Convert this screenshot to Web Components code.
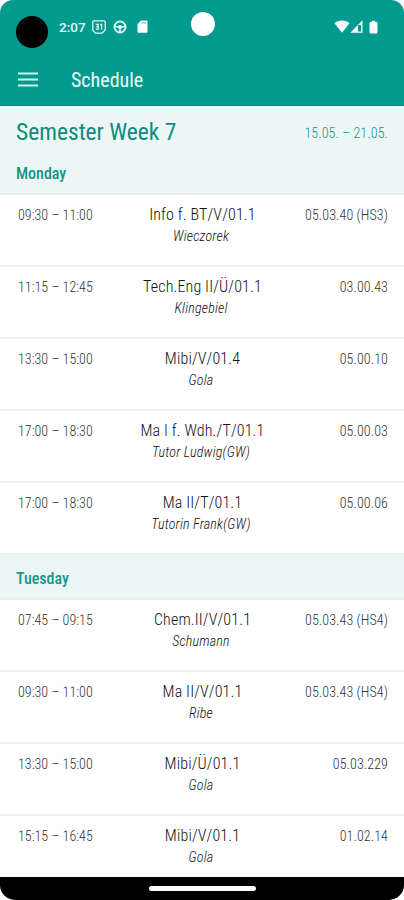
<!DOCTYPE html>
<html lang="de">
<head>
<meta charset="utf-8">
<meta name="viewport" content="width=device-width, initial-scale=1">
<title>Schedule</title>
<style>
    html, body {
        margin: 0;
        height: 100%;
        background: #fff;
        overflow: hidden;
    }
    body {
        font-family: "Roboto Condensed", Roboto, sans-serif;
        font-stretch: 75%;
    }
</style>
</head>
<body>
<schedule-app></schedule-app>

<script>
const WEEK = {
    title: "Semester Week 7",
    range: "15.05. – 21.05.",
    days: [
        {
            name: "Monday",
            lessons: [
                ["09:30 – 11:00", "Info f. BT/V/01.1", "Wieczorek", "05.03.40 (HS3)"],
                ["11:15 – 12:45", "Tech.Eng II/Ü/01.1", "Klingebiel", "03.00.43"],
                ["13:30 – 15:00", "Mibi/V/01.4", "Gola", "05.00.10"],
                ["17:00 – 18:30", "Ma I f. Wdh./T/01.1", "Tutor Ludwig(GW)", "05.00.03"],
                ["17:00 – 18:30", "Ma II/T/01.1", "Tutorin Frank(GW)", "05.00.06"]
            ]
        },
        {
            name: "Tuesday",
            lessons: [
                ["07:45 – 09:15", "Chem.II/V/01.1", "Schumann", "05.03.43 (HS4)"],
                ["09:30 – 11:00", "Ma II/V/01.1", "Ribe", "05.03.43 (HS4)"],
                ["13:30 – 15:00", "Mibi/Ü/01.1", "Gola", "05.03.229"],
                ["15:15 – 16:45", "Mibi/V/01.1", "Gola", "01.02.14"]
            ]
        }
    ]
};

class StatusBar extends HTMLElement {
    constructor() {
        super();
        this.attachShadow({ mode: "open" });
    }

    connectedCallback() {
        this.shadowRoot.innerHTML = `
            <style>
                :host {
                    display: grid;
                    grid-template-columns: 1fr 24px 1fr;
                    height: 53px;
                    color: #e0f7f4;
                }
                svg { display: block; }
                .left, .right { display: flex; align-items: center; }
                .left { padding-left: 16px; }
                .avatar {
                    width: 32px;
                    height: 32px;
                    margin-top: 10px;
                    border-radius: 50%;
                    background: #000;
                }
                .time {
                    margin-left: 11px;
                    width: 28px;
                    font: 500 13.5px/16px Roboto, sans-serif;
                    font-stretch: 100%;
                }
                .camera {
                    width: 24px;
                    height: 24px;
                    margin: 12px 0 0 1px;
                    border-radius: 50%;
                    background: #fff;
                }
                .right { justify-content: flex-end; padding-right: 26px; }
            </style>
            <div class="left">
                <div class="avatar"></div>
                <span class="time">2:07</span>
                <svg style="margin-left:4px" width="16" height="16" viewBox="0 0 16 16">
                    <path d="M3 1.800h10q1.200 0 1.200 1.200v8l-3.200 3.200H4.600L1.800 11.400V3Q1.800 1.800 3 1.800Z" fill="none" stroke="currentColor" stroke-width="1.300"/>
                    <path d="M4.800 5.300h2.500v4.900H4.800M5.200 7.700h2M9.200 6l1.400-.7v5.200" fill="none" stroke="currentColor" stroke-width="1.200"/>
                </svg>
                <svg style="margin-left:6px" width="14" height="14" viewBox="0 0 14 14">
                    <circle cx="7" cy="7" r="5.500" fill="none" stroke="currentColor" stroke-width="1.900"/>
                    <path d="M1.500 6.800h11M7 7v5.500" stroke="currentColor" stroke-width="1.600"/>
                    <circle cx="7" cy="7" r="2" fill="currentColor"/>
                </svg>
                <svg style="margin-left:10px" width="11" height="13" viewBox="0 0 11 13">
                    <path d="M4 .5h5.500q1 0 1 1V12q0 .7-1 .7h-8q-1 0-1-.7V4Z" fill="#fff"/>
                    <path d="M4.500 2.800h4.500" stroke="#7cc9c0" stroke-width="1.200"/>
                </svg>
            </div>
            <div class="camera"></div>
            <div class="right">
                <svg width="16" height="13" viewBox="0 0 16 13">
                    <path d="M8 .5C11 .5 13.600 1.500 15.500 3.300L8 12.700.5 3.300C2.400 1.500 5 .5 8 .5Z" fill="#fff"/>
                </svg>
                <svg width="13" height="13" viewBox="0 0 13 13">
                    <path d="M12.500.2v12.500H.3ZM11.100 5H8v6.400h3.100Z" fill="#fff" fill-rule="evenodd"/>
                </svg>
                <svg style="margin-left:6px" width="9" height="14" viewBox="0 0 9 14">
                    <path d="M3 .7h3v1.100h1q1.500 0 1.500 1.500v8.700q0 1.500-1.500 1.500H2Q.5 13.500.5 12V3.300Q.5 1.800 2 1.800h1Z" fill="#fff"/>
                </svg>
            </div>
        `;
    }
}

class AppBar extends HTMLElement {
    constructor() {
        super();
        this.attachShadow({ mode: "open" });
    }

    connectedCallback() {
        this.shadowRoot.innerHTML = `
            <style>
                :host {
                    display: flex;
                    align-items: center;
                    height: 53px;
                    box-sizing: border-box;
                    padding-left: 18px;
                    border-bottom: 1px solid #078a80;
                    color: #eefcfa;
                }
                svg { display: block; margin-right: 33px; }
                .title { font-size: 20px; line-height: 26px; font-weight: 450; padding-top: 2px; }
            </style>
            <svg width="20" height="15" viewBox="0 0 20 15">
                <path d="M0 1.500h20M0 7.500h20M0 13.500h20" stroke="#d9f5f1" stroke-width="2"/>
            </svg>
            <span class="title"><slot></slot></span>
        `;
    }
}

class WeekHeader extends HTMLElement {
    constructor() {
        super();
        this.attachShadow({ mode: "open" });
    }

    connectedCallback() {
        this.shadowRoot.innerHTML = `
            <style>
                :host {
                    display: flex;
                    justify-content: space-between;
                    align-items: center;
                    height: 47px;
                    padding: 2px 16px 0 16px;
                    background: #ebf6f5;
                    color: #0c8c80;
                }
                .title { font-size: 23.5px; line-height: 30px; font-weight: 450; }
                .range { font-size: 14px; line-height: 18px; font-weight: 300; letter-spacing: .1px; padding-top: 3px; color: #1d9488; }
            </style>
            <span class="title"><slot></slot></span>
            <span class="range"><slot name="range"></slot></span>
        `;
    }
}

class DayHeader extends HTMLElement {
    constructor() {
        super();
        this.attachShadow({ mode: "open" });
    }

    connectedCallback() {
        this.shadowRoot.innerHTML = `
            <style>
                :host {
                    display: flex;
                    align-items: center;
                    height: 45px;
                    box-sizing: border-box;
                    padding: 4px 16px 0;
                    border-bottom: 2px solid #e9efee;
                    background: #ebf6f5;
                    color: #14968a;
                    font-size: 16px;
                    line-height: 20px;
                    font-weight: 500;
                }
                :host([first]) { height: 40px; padding-top: 0; }
            </style>
            <span><slot></slot></span>
        `;
    }
}

class LessonRow extends HTMLElement {
    constructor() {
        super();
        this.attachShadow({ mode: "open" });
    }

    connectedCallback() {
        this.shadowRoot.innerHTML = `
            <style>
                :host {
                    display: grid;
                    grid-template-columns: 110px 1fr 110px;
                    height: 72px;
                    box-sizing: border-box;
                    padding: 9px 16px 0 18px;
                    border-bottom: 2px solid #f1f1f1;
                    color: #333;
                    font-size: 14px;
                    font-weight: 300;
                    line-height: 22px;
                    white-space: nowrap;
                }
                .lesson { text-align: center; margin-left: -2px; }
                .subject { font-size: 16px; letter-spacing: .15px; color: #111; padding-left: 1px; }
                .teacher { font-style: italic; letter-spacing: .2px; line-height: 21px; color: #111; padding-right: 2px; }
                .time { letter-spacing: .03px; }
                .room { text-align: right; letter-spacing: .1px; }
            </style>
            <div class="time"><slot name="time"></slot></div>
            <div class="lesson">
                <div class="subject"><slot name="subject"></slot></div>
                <div class="teacher"><slot name="teacher"></slot></div>
            </div>
            <div class="room"><slot name="room"></slot></div>
        `;
    }
}

class NavBar extends HTMLElement {
    constructor() {
        super();
        this.attachShadow({ mode: "open" });
    }

    connectedCallback() {
        this.shadowRoot.innerHTML = `
            <style>
                :host {
                    display: flex;
                    align-items: center;
                    justify-content: center;
                    height: 23px;
                    background: #000;
                }
                .pill { width: 107px; height: 5px; border-radius: 3px; background: #fff; }
            </style>
            <div class="pill"></div>
        `;
    }
}

class ScheduleApp extends HTMLElement {
    constructor() {
        super();
        this.attachShadow({ mode: "open" });
    }

    connectedCallback() {
        this.render();
    }

    renderLesson([time, subject, teacher, room]) {
        return `
            <lesson-row>
                <span slot="time">${time}</span>
                <span slot="subject">${subject}</span>
                <span slot="teacher">${teacher}</span>
                <span slot="room">${room}</span>
            </lesson-row>
        `;
    }

    render() {
        const days = WEEK.days.map((day, i) => `
            <day-header ${i === 0 ? "first" : ""}>${day.name}</day-header>
            ${day.lessons.map(this.renderLesson).join("")}
        `).join("");

        this.shadowRoot.innerHTML = `
            <style>
                :host {
                    display: flex;
                    flex-direction: column;
                    height: 100vh;
                    overflow: hidden;
                    border-radius: 13px 13px 15px 15px;
                    background: #fff;
                }
                header { background: #009a8e; flex: none; }
                main { flex: 1; min-height: 0; overflow: hidden; }
                nav-bar { flex: none; }
            </style>
            <header>
                <status-bar></status-bar>
                <app-bar>Schedule</app-bar>
            </header>
            <main>
                <week-header>${WEEK.title}<span slot="range">${WEEK.range}</span></week-header>
                ${days}
            </main>
            <nav-bar></nav-bar>
        `;
    }
}

customElements.define("status-bar", StatusBar);
customElements.define("app-bar", AppBar);
customElements.define("week-header", WeekHeader);
customElements.define("day-header", DayHeader);
customElements.define("lesson-row", LessonRow);
customElements.define("nav-bar", NavBar);
customElements.define("schedule-app", ScheduleApp);
</script>
</body>
</html>
